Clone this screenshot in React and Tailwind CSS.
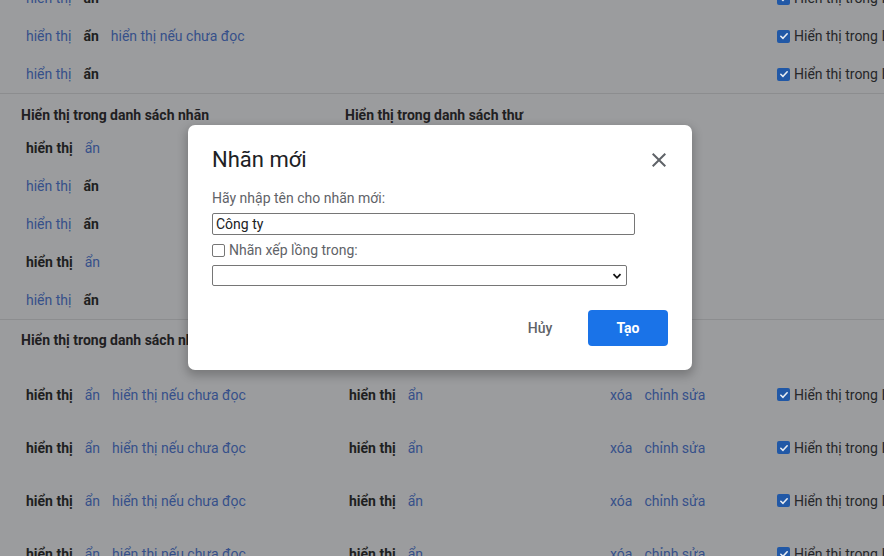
import React from "react";

const font = { fontFamily: "Roboto, 'Noto Sans', Arial, sans-serif" };

// dimmed page text (page sits behind the modal scrim)
const Bold = ({ children }) => (
  <span className="font-bold text-[#1e1f21]">{children}</span>
);
const Link = ({ children }) => (
  <span className="text-[#36508a]">{children}</span>
);

const ImapCheck = () => (
  <div className="flex items-center gap-[4px] whitespace-nowrap text-[#26272a]">
    <span className="flex h-[13px] w-[13px] shrink-0 items-center justify-center rounded-[2px] bg-[#2158a6]">
      <svg viewBox="0 0 12 12" className="h-[10px] w-[10px]">
        <path
          d="M2.2 6.3 4.8 8.8 9.8 3.4"
          fill="none"
          stroke="#e8ecf2"
          strokeWidth="1.9"
          strokeLinecap="round"
          strokeLinejoin="round"
        />
      </svg>
    </span>
    <span>Hiển thị trong IMAP</span>
  </div>
);

const grid = "grid grid-cols-[323px_261px_167px_1fr] items-center";

const TopRow = ({ children }) => (
  <div className={`${grid} h-[38px] pl-[26px]`}>
    <div className="flex gap-[12px]">{children}</div>
    <div />
    <div />
    <ImapCheck />
  </div>
);

const LabelRow = ({ boldFirst }) => (
  <div className="flex h-[38px] items-center gap-[12px] pl-[26px]">
    {boldFirst ? (
      <>
        <Bold>hiển thị</Bold>
        <Link>ẩn</Link>
      </>
    ) : (
      <>
        <Link>hiển thị</Link>
        <Bold>ẩn</Bold>
      </>
    )}
  </div>
);

const FullRow = () => (
  <div className={`${grid} h-[53px] pl-[26px]`}>
    <div className="flex gap-[12px]">
      <Bold>hiển thị</Bold>
      <Link>ẩn</Link>
      <Link>hiển thị nếu chưa đọc</Link>
    </div>
    <div className="flex gap-[12px]">
      <Bold>hiển thị</Bold>
      <Link>ẩn</Link>
    </div>
    <div className="flex gap-[12px]">
      <Link>xóa</Link>
      <Link>chỉnh sửa</Link>
    </div>
    <ImapCheck />
  </div>
);

const NewLabelDialog = () => (
  <div className="absolute left-[188px] top-[125px] flex h-[245px] w-[504px] flex-col rounded-[7px] bg-white px-[24px] pt-[21px] shadow-[0_4px_10px_2px_rgba(0,0,0,0.22)]">
    <div className="flex h-[28px] items-center justify-between">
      <h2 className="text-[22px] leading-[28px] text-[#202124]">Nhãn mới</h2>
      <svg viewBox="0 0 24 24" className="mr-[-3px] h-[24px] w-[24px]">
        <path
          d="M19 6.41 17.59 5 12 10.59 6.41 5 5 6.41 10.59 12 5 17.59 6.41 19 12 13.41 17.59 19 19 17.59 13.41 12z"
          fill="#5f6368"
        />
      </svg>
    </div>
    <div className="mt-[14px] text-[14px] leading-[20px] text-[#5f6368]">
      Hãy nhập tên cho nhãn mới:
    </div>
    <div className="mt-[5px] flex h-[22px] w-[423px] items-center rounded-[2px] border border-[#767676] px-[3px] text-[14px] text-[#202124]">
      Công ty
    </div>
    <div className="mt-[4px] flex h-[22px] items-center gap-[4px] text-[14px] text-[#5f6368]">
      <span className="h-[13px] w-[13px] rounded-[2px] border border-[#767676]" />
      <span>Nhãn xếp lồng trong:</span>
    </div>
    <div className="mt-[4px] flex h-[21px] w-[415px] items-center justify-end rounded-[2px] border border-[#767676] pr-[4px]">
      <svg viewBox="0 0 10 10" className="h-[10px] w-[10px]">
        <path
          d="M1.5 3.2 5 6.8 8.5 3.2"
          fill="none"
          stroke="#111"
          strokeWidth="1.8"
        />
      </svg>
    </div>
    <div className="mt-[24px] flex justify-end gap-[8px]">
      <button className="h-[36px] w-[80px] rounded-[4px] text-[14px] font-medium text-[#5f6368]">
        Hủy
      </button>
      <button className="h-[36px] w-[80px] rounded-[4px] bg-[#1a73e8] text-[14px] font-bold text-white">
        Tạo
      </button>
    </div>
  </div>
);

export default function App() {
  return (
    <div
      className="relative h-[556px] w-[884px] overflow-hidden bg-[#9b9c9e] text-[14px] leading-[20px]"
      style={font}
    >
      <div className="mt-[-21px]">
        <TopRow>
          <Link>hiển thị</Link>
          <Bold>ẩn</Bold>
        </TopRow>
        <TopRow>
          <Link>hiển thị</Link>
          <Bold>ẩn</Bold>
          <Link>hiển thị nếu chưa đọc</Link>
        </TopRow>
        <TopRow>
          <Link>hiển thị</Link>
          <Bold>ẩn</Bold>
        </TopRow>
      </div>

      <div className="border-t border-[#8c8d8f]">
        <div className="grid h-[35px] grid-cols-[324px_1fr] pl-[21px] pt-[11px] font-bold text-[#1f2022]">
          <div>Hiển thị trong danh sách nhãn</div>
          <div>Hiển thị trong danh sách thư</div>
        </div>
        <LabelRow boldFirst />
        <LabelRow />
        <LabelRow />
        <LabelRow boldFirst />
        <LabelRow />
      </div>

      <div className="border-t border-[#8c8d8f]">
        <div className="grid h-[48px] grid-cols-[324px_1fr] pl-[21px] pt-[10px] font-bold text-[#1f2022]">
          <div>Hiển thị trong danh sách nhãn</div>
          <div>Hiển thị trong danh sách thư</div>
        </div>
        <FullRow />
        <FullRow />
        <FullRow />
        <FullRow />
      </div>

      <NewLabelDialog />
    </div>
  );
}
